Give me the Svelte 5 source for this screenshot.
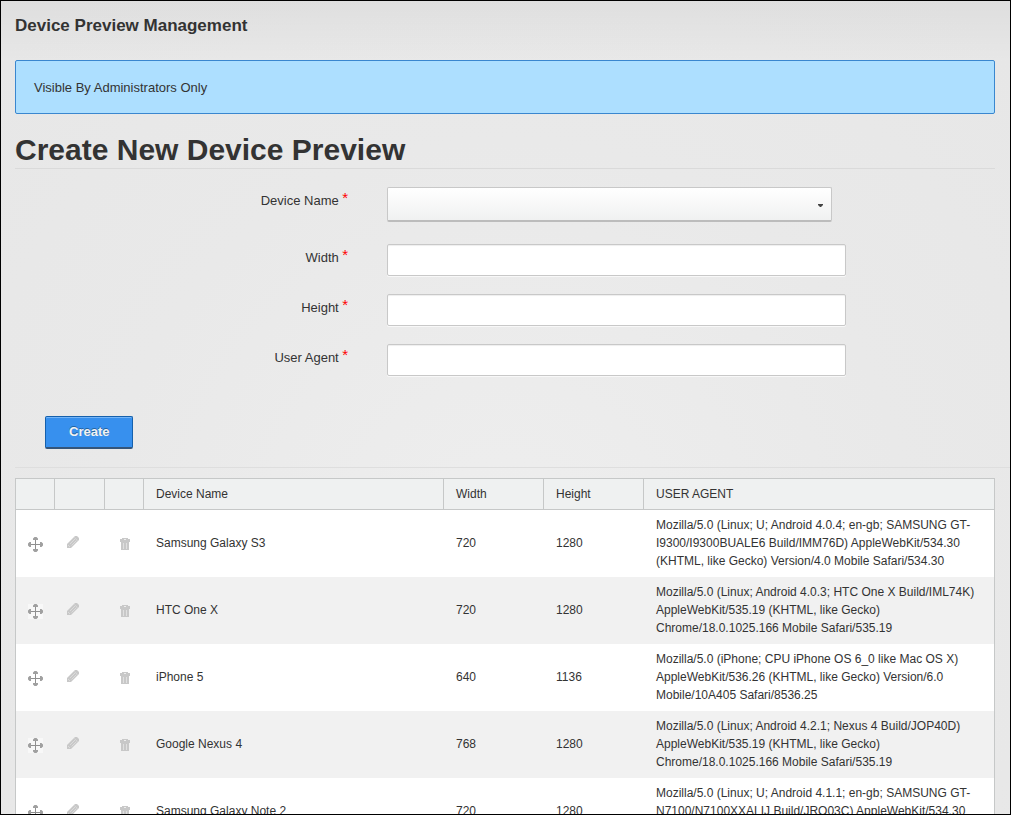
<script>
  const fields = [
    { id: 'width', label: 'Width' },
    { id: 'height', label: 'Height' },
    { id: 'user-agent', label: 'User Agent' }
  ];

  const devices = [
    {
      name: 'Samsung Galaxy S3',
      width: 720,
      height: 1280,
      agent: 'Mozilla/5.0 (Linux; U; Android 4.0.4; en-gb; SAMSUNG GT-I9300/I9300BUALE6 Build/IMM76D) AppleWebKit/534.30 (KHTML, like Gecko) Version/4.0 Mobile Safari/534.30'
    },
    {
      name: 'HTC One X',
      width: 720,
      height: 1280,
      agent: 'Mozilla/5.0 (Linux; Android 4.0.3; HTC One X Build/IML74K) AppleWebKit/535.19 (KHTML, like Gecko) Chrome/18.0.1025.166 Mobile Safari/535.19'
    },
    {
      name: 'iPhone 5',
      width: 640,
      height: 1136,
      agent: 'Mozilla/5.0 (iPhone; CPU iPhone OS 6_0 like Mac OS X) AppleWebKit/536.26 (KHTML, like Gecko) Version/6.0 Mobile/10A405 Safari/8536.25'
    },
    {
      name: 'Google Nexus 4',
      width: 768,
      height: 1280,
      agent: 'Mozilla/5.0 (Linux; Android 4.2.1; Nexus 4 Build/JOP40D) AppleWebKit/535.19 (KHTML, like Gecko) Chrome/18.0.1025.166 Mobile Safari/535.19'
    },
    {
      name: 'Samsung Galaxy Note 2',
      width: 720,
      height: 1280,
      agent: 'Mozilla/5.0 (Linux; U; Android 4.1.1; en-gb; SAMSUNG GT-N7100/N7100XXALIJ Build/JRO03C) AppleWebKit/534.30 (KHTML, like Gecko) Version/4.0 Mobile Safari/534.30'
    }
  ];
</script>

<main>
  <h1>Device Preview Management</h1>
  <p class="notice">Visible By Administrators Only</p>

  <h2>Create New Device Preview</h2>

  <form onsubmit={(e) => e.preventDefault()}>
    <div class="field first">
      <label for="device-name">Device Name <span class="required">*</span></label>
      <div class="select">
        <select id="device-name">
          <option></option>
          {#each devices as device}
            <option>{device.name}</option>
          {/each}
        </select>
        <svg width="5" height="3" viewBox="0 0 5 3" aria-hidden="true">
          <path d="M0 0h5v1L3 3H2L0 1z" fill="#444" />
        </svg>
      </div>
    </div>
    {#each fields as field}
      <div class="field">
        <label for={field.id}>{field.label} <span class="required">*</span></label>
        <input id={field.id} type="text" />
      </div>
    {/each}
    <button class="create" type="submit">Create</button>
  </form>

  <hr />

  <table>
    <colgroup>
      <col class="c-move" />
      <col class="c-edit" />
      <col class="c-delete" />
      <col class="c-name" />
      <col class="c-size" />
      <col class="c-size" />
      <col />
    </colgroup>
    <thead>
      <tr>
        <th></th>
        <th></th>
        <th></th>
        <th>Device Name</th>
        <th>Width</th>
        <th>Height</th>
        <th>USER AGENT</th>
      </tr>
    </thead>
    <tbody>
      {#each devices as device}
        <tr>
          <td class="icon">
            <button class="move" type="button" aria-label="Move">
              <svg width="15" height="15" viewBox="0 0 15 15">
                <rect width="15" height="15" fill="#fff" opacity="0.5" />
                <path d="M7 2h1v11H7zM2 7h11v1H2z" fill="#909090" />
                <path
                  d="M6.500 0h2L10 1.500V3H5V1.500zM6.500 15h2l1.500-1.500V12H5v1.500zM0 6.500v2L1.500 10H3V5H1.500zM15 6.500v2L13.500 10H12V5h1.500z"
                  fill="#a0a0a0"
                />
              </svg>
            </button>
          </td>
          <td class="icon">
            <button class="edit" type="button" aria-label="Edit">
              <svg width="12" height="12" viewBox="0 0 12 12">
                <path d="M0 12V8l7-7 1-1h2l2 2v2l-1 1-7 7z" fill="#c8c8c8" />
                <path d="M3 8l5-5M4.500 9.500l5-5" stroke="#e4e4e4" stroke-width="0.700" />
                <path d="M7.500 1.500l3 3" stroke="#ddd" stroke-width="0.700" />
                <path d="M1 9l2 2" stroke="#e4e4e4" stroke-width="0.700" />
              </svg>
            </button>
          </td>
          <td class="icon">
            <button class="delete" type="button" aria-label="Delete">
              <svg width="10" height="12" viewBox="0 0 10 12">
                <path d="M2 1V0h6v1h2v3H9v8H1V4H0V1z" fill="#c8c8c8" />
                <path d="M4 1h2v1H4z" fill="#eee" />
                <path d="M3 5h1v6H3zM6 5h1v6H6z" fill="#e0e0e0" />
              </svg>
            </button>
          </td>
          <td>{device.name}</td>
          <td>{device.width}</td>
          <td>{device.height}</td>
          <td>{device.agent}</td>
        </tr>
      {/each}
    </tbody>
  </table>
</main>

<style>
  :global(body) {
    margin: 0;
  }

  main {
    box-sizing: border-box;
    height: 100vh;
    overflow: hidden;
    border: 1px solid #000;
    padding: 15px 15px 0 14px;
    background:
      linear-gradient(rgba(0, 0, 0, 0.04), transparent 60px),
      radial-gradient(circle at 50% 540px, #eee, #e9e9e9 400px, #e7e7e7 700px);
    color: #333;
    font: 13px/18px 'Liberation Sans', Arial, sans-serif;
  }

  h1 {
    margin: 0 0 24px;
    font-size: 17px;
    line-height: 20px;
  }

  .notice {
    margin: 0 0 18px;
    border: 1px solid #3a87cf;
    border-radius: 2px;
    padding: 18px 18px 16px;
    background: #addfff;
  }

  h2 {
    margin: 0 0 18px;
    border-bottom: 1px solid #dadada;
    font-size: 30px;
    line-height: 36px;
  }

  .field {
    display: grid;
    grid-template-columns: 34% 46.8%;
    column-gap: 4%;
    margin-bottom: 18px;
  }

  .field.first {
    margin-bottom: 22px;
  }

  label {
    padding-top: 5px;
    text-align: right;
  }

  .required {
    color: #f00;
    font-size: 15px;
    line-height: 0;
    vertical-align: 2px;
  }

  .select {
    position: relative;
    margin-right: 14px;
  }

  .select svg {
    position: absolute;
    top: 17px;
    right: 9px;
    pointer-events: none;
  }

  select,
  input {
    display: block;
    box-sizing: border-box;
    width: 100%;
    height: 32px;
    margin: 0;
    border: 1px solid #c8c8c8;
    border-radius: 2px;
    padding: 0 8px;
    background: #fff;
    color: inherit;
    font: inherit;
    box-shadow:
      inset 0 1px 1px #eee,
      0 1px 0 #f8f8f8;
  }

  select {
    height: 35px;
    appearance: none;
    border-bottom: 2px solid #bcbcbc;
    background: linear-gradient(#fff, #f0f1f1);
    box-shadow: none;
  }

  .create {
    display: block;
    margin: 40px 0 18px 30px;
    border: 1px solid #1560ac;
    border-bottom: 2px solid #34557a;
    border-radius: 2px;
    padding: 6px 23px;
    background: #3790ee;
    box-shadow: inset 0 1px 0 #73b4f7;
    color: #f2f2f2;
    font: bold 13px/18px 'Liberation Sans', Arial, sans-serif;
    line-height: 18px;
    text-shadow: 0 -1px 0 #24639f;
  }

  hr {
    margin: 0 -15px 10px 0;
    border: 0;
    border-top: 1px solid #dedede;
  }

  table {
    width: 100%;
    table-layout: fixed;
    border-collapse: separate;
    border-spacing: 0;
    border: 1px solid #c6c8c8;
    background: #fff;
    font-size: 12px;
  }

  .c-move {
    width: 39px;
  }

  .c-edit {
    width: 50px;
  }

  .c-delete {
    width: 39px;
  }

  .c-name {
    width: 300px;
  }

  .c-size {
    width: 100px;
  }

  th {
    height: 18px;
    border-right: 1px solid #c6c8c8;
    border-bottom: 1px solid #c6c8c8;
    padding: 6px 12px;
    background: #eff1f1;
    font-weight: normal;
    text-align: left;
  }

  th:last-child {
    border-right: 0;
  }

  td {
    padding: 6px 12px 7px;
  }

  tbody tr:nth-child(even) {
    background: #f1f1f1;
  }

  .icon {
    padding: 0 12px;
  }

  .icon button {
    display: block;
    margin: 0;
    border: 0;
    padding: 0;
    background: none;
  }

  .icon svg {
    display: block;
  }

  .icon .move {
    padding-top: 2px;
  }

  .icon .edit {
    padding-bottom: 4px;
  }

  .icon .delete {
    margin-left: 3px;
    padding-top: 1px;
  }
</style>
